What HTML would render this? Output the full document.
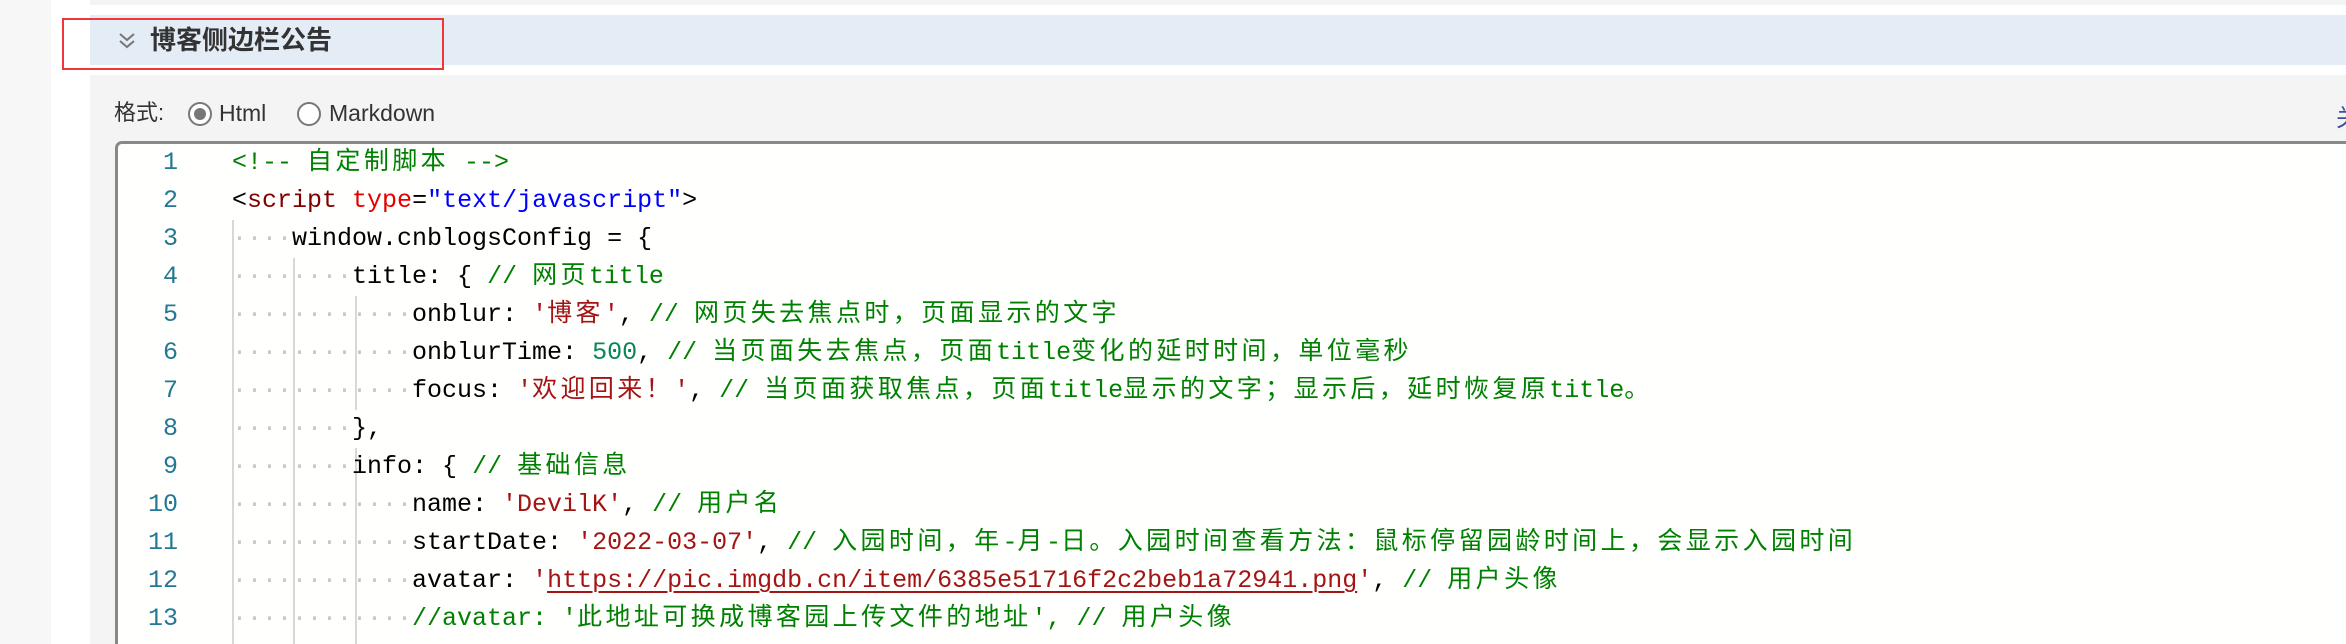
<!DOCTYPE html>
<html><head><meta charset="utf-8"><style>
*{margin:0;padding:0;box-sizing:border-box}
html,body{width:2346px;height:644px;overflow:hidden}
body{background:#fff;position:relative;font-family:"Liberation Sans","Noto Sans CJK SC",sans-serif}
.a{position:absolute}
.code{font-family:"Liberation Mono","Noto Sans CJK SC",monospace;font-size:25px;line-height:38px;color:#000}
.code div{white-space:pre;height:38px}
.ln{position:absolute;left:0;width:178px;text-align:right;color:#237893}
.c{color:#008000}
.t{color:#800000}
.at{color:#e50000}
.sb{color:#0000ff}
.s{color:#a31515}
.n{color:#098658}
.d{color:#c8c8c8}
i{font-style:normal;letter-spacing:3.4px}
.u{text-decoration:underline;text-decoration-color:#a31515;text-underline-offset:4px;text-decoration-thickness:2px}
.g{position:absolute;width:2px;background:#d8d8d8}
</style></head><body>
<div class="a" style="left:0;top:0;width:51px;height:644px;background:#f7f7f7"></div>
<div class="a" style="left:90px;top:0;width:2256px;height:5px;background:#f4f4f4"></div>
<div class="a" style="left:90px;top:15px;width:2256px;height:50px;background:#e4ecf6"></div>
<div class="a" style="left:90px;top:75px;width:2256px;height:569px;background:#f4f4f4"></div>
<div class="a" style="left:62px;top:18px;width:382px;height:52px;border:2px solid #f0363a"></div>
<svg class="a" style="left:117px;top:31px" width="20" height="20" viewBox="0 0 20 20"><path d="M3 3l7 6 7-6M3 10l7 6 7-6" fill="none" stroke="#777" stroke-width="2"/></svg>
<div class="a" style="left:150px;top:24px;font-size:26px;font-weight:bold;color:#333;line-height:32px">博客侧边栏公告</div>
<div class="a" style="left:114px;top:98px;font-size:22px;color:#333;line-height:30px">格式:</div>
<div class="a" style="left:188px;top:102px;width:24px;height:24px;border-radius:50%;border:2px solid #777;background:#fff"><div style="margin:4px;width:12px;height:12px;border-radius:50%;background:#777"></div></div>
<div class="a" style="left:219px;top:98px;font-size:23px;color:#333;line-height:30px">Html</div>
<div class="a" style="left:297px;top:102px;width:24px;height:24px;border-radius:50%;border:2px solid #777;background:#fff"></div>
<div class="a" style="left:329px;top:98px;font-size:23px;color:#333;line-height:30px">Markdown</div>
<div class="a" style="left:2336px;top:104px;font-size:24px;color:#3c4fa0;line-height:30px">关</div>
<div class="a" style="left:115px;top:141px;width:2300px;height:510px;border:3px solid #888;border-radius:7px;background:#fffffe"></div>
<div class="g" style="left:232px;top:220px;height:424px"></div>
<div class="g" style="left:293px;top:258px;height:386px"></div>
<div class="g" style="left:355px;top:296px;height:114px"></div>
<div class="g" style="left:355px;top:448px;height:196px"></div>
<div class="a code" style="left:0;top:144px;width:2346px;height:500px">
<span class="ln" style="top:0">1</span><span class="ln" style="top:38px">2</span><span class="ln" style="top:76px">3</span><span class="ln" style="top:114px">4</span><span class="ln" style="top:152px">5</span><span class="ln" style="top:190px">6</span><span class="ln" style="top:228px">7</span><span class="ln" style="top:266px">8</span><span class="ln" style="top:304px">9</span><span class="ln" style="top:342px">10</span><span class="ln" style="top:380px">11</span><span class="ln" style="top:418px">12</span><span class="ln" style="top:456px">13</span>
<section class="a" style="left:232px;top:0"><div class="c">&lt;!-- <i>自定制脚本</i> --&gt;</div><div>&lt;<span class="t">script</span> <span class="at">type</span>=<span class="sb">"text/javascript"</span>&gt;</div><div><span class="d">····</span>window.cnblogsConfig = {</div><div><span class="d">········</span>title: { <span class="c">// <i>网页</i>title</span></div><div><span class="d">············</span>onblur: <span class="s">'<i>博客</i>'</span>, <span class="c">// <i>网页失去焦点时，页面显示的文字</i></span></div><div><span class="d">············</span>onblurTime: <span class="n">500</span>, <span class="c">// <i>当页面失去焦点，页面</i>title<i>变化的延时时间，单位毫秒</i></span></div><div><span class="d">············</span>focus: <span class="s">'<i>欢迎回来！</i>'</span>, <span class="c">// <i>当页面获取焦点，页面</i>title<i>显示的文字；显示后，延时恢复原</i>title<i>。</i></span></div><div><span class="d">········</span>},</div><div><span class="d">········</span>info: { <span class="c">// <i>基础信息</i></span></div><div><span class="d">············</span>name: <span class="s">'DevilK'</span>, <span class="c">// <i>用户名</i></span></div><div><span class="d">············</span>startDate: <span class="s">'2022-03-07'</span>, <span class="c">// <i>入园时间，年</i>-<i>月</i>-<i>日。入园时间查看方法：鼠标停留园龄时间上，会显示入园时间</i></span></div><div><span class="d">············</span>avatar: <span class="s">'<span class="u">https://pic.imgdb.cn/item/6385e51716f2c2beb1a72941.png</span>'</span>, <span class="c">// <i>用户头像</i></span></div><div><span class="d">············</span><span class="c">//avatar: '<i>此地址可换成博客园上传文件的地址</i>', // <i>用户头像</i></span></div></section>
</div>
</body></html>
